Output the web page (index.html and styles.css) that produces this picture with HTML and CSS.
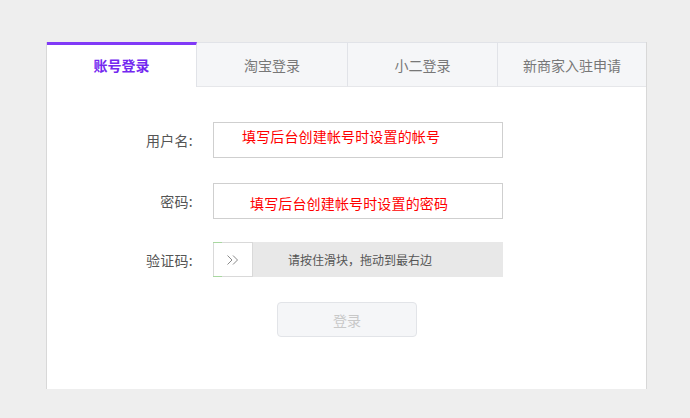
FILE: index.html
```html
<!DOCTYPE html>
<html lang="zh-CN">
<head>
<meta charset="utf-8">
<title>登录</title>
<link rel="stylesheet" href="styles.css">
</head>
<body>
<div class="page">
  <div class="card">
    <div class="tabs">
      <div class="tab active">账号登录</div>
      <div class="tab">淘宝登录</div>
      <div class="tab">小二登录</div>
      <div class="tab last">新商家入驻申请</div>
    </div>
    <div class="form">
      <div class="row">
        <div class="label">用户名:</div>
        <div class="field field-user">填写后台创建帐号时设置的帐号</div>
      </div>
      <div class="row">
        <div class="label">密码:</div>
        <div class="field field-pass">填写后台创建帐号时设置的密码</div>
      </div>
      <div class="row row-verify">
        <div class="label">验证码:</div>
        <div class="slider">
          <div class="handle">
            <svg width="14" height="12" viewBox="0 0 14 12"><path d="M1.5 1.5 L6 6 L1.5 10.5 M7 1.5 L11.5 6 L7 10.5" fill="none" stroke="#8a8a8a" stroke-width="1"/></svg>
          </div>
          <div class="slider-text">请按住滑块，拖动到最右边</div>
        </div>
      </div>
      <div class="row btn-row">
        <div class="btn">登录</div>
      </div>
    </div>
  </div>
</div>
</body>
</html>
```

FILE: styles.css
```css
* { box-sizing: border-box; }
html, body { margin: 0; padding: 0; }
body {
  background: #eeeeee;
  font-family: "Noto Sans CJK SC", "Noto Sans", sans-serif;
  width: 690px;
  height: 418px;
  overflow: hidden;
}
.page {
  padding: 42px 0 0 46px;
}
.card {
  width: 601px;
  height: 347px;
  background: #fff;
  border-left: 1px solid #d8d8d8;
  border-right: 1px solid #d8d8d8;
}
.tabs {
  display: flex;
  height: 45px;
}
.tab {
  width: 150px;
  display: flex;
  align-items: center;
  justify-content: center;
  font-size: 14px;
  color: #777;
  background: #f5f6f8;
  border-top: 1px solid #e1e3e8;
  border-left: 1px solid #e1e3e8;
  border-bottom: 1px solid #e6e7ea;
}
.tab.last { width: 149px; }
.tab.active {
  background: #fff;
  color: #7428f0;
  font-weight: 700;
  border-top: 3px solid #8039f7;
  border-left: none;
  border-bottom: none;
  border-right: 1px solid #e1e3e8;
  padding-bottom: 2px;
}
.tab.active + .tab { border-left: none; }
.form {
  padding-top: 35px;
  display: flex;
  flex-direction: column;
}
.row {
  display: flex;
  align-items: center;
}
.row + .row { margin-top: 25px; }
.row.row-verify { margin-top: 23px; }
.label {
  width: 146px;
  margin-right: 20px;
  text-align: right;
  font-size: 14px;
  color: #555;
  letter-spacing: 0.3px;
}
.field {
  width: 290px;
  height: 36px;
  border: 1px solid #cfcfcf;
  color: #f00;
  font-size: 14px;
  line-height: 20px;
  letter-spacing: 0.15px;
}
.field-user { padding: 3px 0 0 28px; }
.field-pass { padding: 9px 0 0 36px; }
.slider {
  position: relative;
  width: 290px;
  height: 35px;
  background: #e8e8e8;
  display: flex;
  align-items: center;
}
.handle {
  position: relative;
  width: 40px;
  height: 35px;
  background: #fff;
  border: 1px solid #d9d9d9;
  display: flex;
  align-items: center;
  justify-content: center;
  z-index: 1;
}
.handle::before, .handle::after {
  content: "";
  position: absolute;
  left: -1px;
  width: 9px;
  height: 1px;
  background: #a8d8a0;
}
.handle::before { top: -1px; }
.handle::after { bottom: -1px; }
.slider-text {
  position: absolute;
  left: 0;
  right: 0;
  text-align: center;
  font-size: 12px;
  color: #555;
  padding-left: 4px;
}
.btn-row { padding-left: 230px; }
.row.btn-row { margin-top: 25px; }
.btn {
  width: 140px;
  height: 35px;
  border: 1px solid #e2e4e8;
  border-radius: 4px;
  background: #f5f6f8;
  color: #c8c8c8;
  font-size: 14px;
  display: flex;
  align-items: center;
  justify-content: center;
}
```
